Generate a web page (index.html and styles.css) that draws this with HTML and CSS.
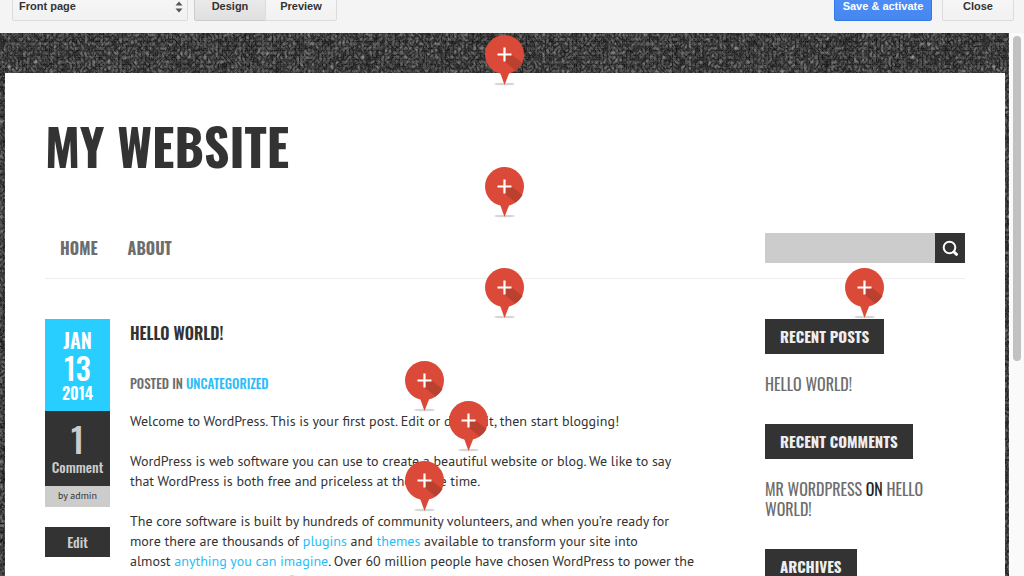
FILE: index.html
```html
<!DOCTYPE html>
<html lang="en">
<head>
<meta charset="utf-8">
<title>My Website – layout editor</title>
<link rel="stylesheet" href="styles.css">
</head>
<body>
<svg class="defs" aria-hidden="true">
  <filter id="leather" x="0" y="0" width="100%" height="100%" color-interpolation-filters="sRGB">
    <feTurbulence type="turbulence" baseFrequency="0.26 0.22" numOctaves="3" seed="8"/>
    <feColorMatrix values="0.4 0.35 0 0 0.03  0.4 0.35 0 0 0.03  0.4 0.35 0 0 0.03  0 0 0 0 1"/>
  </filter>
  <symbol id="pin" viewBox="0 0 40 51">
    <ellipse cx="19.500" cy="49" rx="10.500" ry="1.300" fill="#d6d6d6"/>
    <path d="M14.500 36h10.500L19.500 50z" fill="#db4a39"/>
    <circle cx="19.500" cy="19.500" r="19.500" fill="#db4a39"/>
    <path d="M19.500 26.500V19.500h7l11 8.500A19.500 19.500 0 0 1 30.500 35.600z" fill="#ba4030"/>
    <path d="M12.500 19.500h14M19.500 12.500v14" stroke="#fff" stroke-width="2.200"/>
  </symbol>
</svg>

<header class="toolbar">
  <label class="template">
    <select class="control template-select" aria-label="Template"><option>Front page</option></select>
    <svg class="arrows" viewBox="0 0 8 12"><path d="M0.500 4.500 4 0.500l3.500 4zM0.500 7.500 4 11.500l3.500-4z" fill="#555"/></svg>
  </label>
  <div class="modes">
    <button class="control mode mode-active">Design</button><button class="control mode">Preview</button>
  </div>
  <div class="actions">
    <button class="control save">Save &amp; activate</button>
    <button class="control close">Close</button>
  </div>
</header>

<div class="workspace">
  <div class="preview">
    <svg class="backdrop" aria-hidden="true"><rect width="100%" height="100%" filter="url(#leather)"/></svg>
    <main class="site">
      <h1 class="site-title">MY WEBSITE</h1>
      <nav class="site-nav">
        <a href="#home">HOME</a>
        <a href="#about">ABOUT</a>
        <form class="search">
          <input class="search-box" type="search" aria-label="Search">
          <button class="search-button" type="button" aria-label="Submit search">
            <svg viewBox="0 0 18 18" fill="none" stroke="#fff"><circle cx="8.500" cy="8.500" r="5.800" stroke-width="2"/><path d="M13 13 15.500 15.300" stroke-width="3" stroke-linecap="round"/></svg>
          </button>
        </form>
      </nav>
      <div class="columns">
        <aside class="meta">
          <time class="date" datetime="2014-01-13"><span>JAN</span><b>13</b><small>2014</small></time>
          <div class="comments"><b>1</b><span>Comment</span></div>
          <div class="author">by admin</div>
          <a class="edit" href="#edit">Edit</a>
        </aside>
        <article class="post">
          <h2 class="post-title">HELLO WORLD!</h2>
          <p class="posted">POSTED IN <a href="#uncategorized">UNCATEGORIZED</a></p>
          <p>Welcome to WordPress. This is your first post. Edit or delete it, then start blogging!</p>
          <p>WordPress is web software you can use to create a beautiful website or blog. We like to say<br>that WordPress is both free and priceless at the same time.</p>
          <p>The core software is built by hundreds of community volunteers, and when you’re ready for<br>more there are thousands of <a href="#plugins">plugins</a> and <a href="#themes">themes</a> available to transform your site into<br>almost <a href="#ideas">anything you can imagine</a>. Over 60 million people have chosen WordPress to power the<br>place on the web they call “home” — we’d love you to join the family.</p>
        </article>
        <aside class="sidebar">
          <h3 class="widget-title">RECENT POSTS</h3>
          <p class="widget"><a href="#hello">HELLO WORLD!</a></p>
          <h3 class="widget-title">RECENT COMMENTS</h3>
          <p class="widget"><a href="#mr">MR WORDPRESS</a> ON <a href="#hello">HELLO<br>WORLD!</a></p>
          <h3 class="widget-title">ARCHIVES</h3>
        </aside>
      </div>
    </main>
    <button class="pin pin-top" aria-label="Add widget"><svg><use href="#pin"/></svg></button>
    <button class="pin pin-header" aria-label="Add widget"><svg><use href="#pin"/></svg></button>
    <button class="pin pin-nav" aria-label="Add widget"><svg><use href="#pin"/></svg></button>
    <button class="pin pin-sidebar" aria-label="Add widget"><svg><use href="#pin"/></svg></button>
    <button class="pin pin-meta" aria-label="Add widget"><svg><use href="#pin"/></svg></button>
    <button class="pin pin-intro" aria-label="Add widget"><svg><use href="#pin"/></svg></button>
    <button class="pin pin-text" aria-label="Add widget"><svg><use href="#pin"/></svg></button>
  </div>
  <div class="scrollbar"><div class="thumb"></div></div>
</div>
</body>
</html>
```
FILE: styles.css
```css
* { box-sizing: border-box; }

body {
  margin: 0;
  height: 100vh;
  display: flex;
  flex-direction: column;
  overflow: hidden;
  background: #f4f4f4;
  color: #333;
  font-family: "Liberation Sans", Arial, sans-serif;
}

a { text-decoration: none; }
.defs { position: absolute; width: 0; height: 0; }

/* Toolbar */
.toolbar {
  flex: none;
  height: 33px;
  padding: 0 10px 12px 12px;
  display: flex;
  align-items: flex-end;
  gap: 6px;
  overflow: hidden;
}
.control {
  height: 30px;
  margin: 0;
  padding: 0;
  border: 1px solid #dcdcdc;
  border-radius: 2px;
  background: linear-gradient(#f8f8f8, #f1f1f1);
  color: #333;
  font: bold 11px "Liberation Sans", Arial, sans-serif;
}
.template { position: relative; display: flex; }
.template-select { width: 176px; padding: 0 6px; appearance: none; }
.arrows { position: absolute; right: 5px; bottom: 8px; width: 8px; height: 12px; }
.modes { display: flex; }
.mode { width: 72px; margin-left: -1px; border-radius: 0 2px 2px 0; }
.mode-active {
  margin-left: 0;
  border-color: #ccc;
  border-radius: 2px 0 0 2px;
  background: linear-gradient(#eee, #e0e0e0);
}
.actions { display: flex; gap: 10px; margin-left: auto; }
.save {
  width: 98px;
  border-color: #3079ed;
  background: linear-gradient(#4d90fe, #4787ed);
  color: #fff;
}
.close { width: 72px; }

/* Preview */
.workspace { flex: 1; min-height: 0; display: flex; }
.preview { flex: 1; position: relative; overflow: hidden; background: #2d2d2d; }
.backdrop { position: absolute; top: 0; left: 0; width: 100%; height: 100%; }
.scrollbar { width: 15px; padding: 3px 3px 0 4px; background: #fafafa; }
.thumb { height: 325px; border-radius: 4px; background: #c1c1c1; }

.site {
  position: relative;
  margin: 40px 4px 0 5px;
  padding: 40px;
  min-height: 100%;
  background: #fff;
  font: 14px/20px "PT Sans", "Noto Sans", sans-serif;
}
.site-title, .site-nav, .meta, .post-title, .posted, .sidebar {
  font-family: Oswald, "Liberation Sans Narrow", "DejaVu Sans Condensed", sans-serif;
}
.site-title { margin: 0; font-size: 50px; line-height: 64px; font-weight: 700; }

.site-nav {
  display: flex;
  align-items: center;
  gap: 30px;
  height: 61px;
  margin-top: 41px;
  padding-left: 15px;
  border-bottom: 1px solid #eee;
  font-size: 16px;
  font-weight: 700;
}
.site-nav a { color: #6d6d6d; }
.search { display: flex; margin-left: auto; }
.search-box { width: 170px; height: 30px; padding: 0 8px; border: 0; background: #ccc; appearance: none; }
.search-button {
  width: 30px;
  height: 30px;
  padding: 6px;
  border: 0;
  background: #333;
}
.search-button svg { display: block; width: 18px; height: 18px; }

.columns {
  display: grid;
  grid-template-columns: 65px 1fr 200px;
  column-gap: 20px;
  padding-top: 40px;
}
.meta { display: flex; flex-direction: column; text-align: center; font-weight: 600; }
.date, .comments { display: flex; flex-direction: column; align-items: center; }
.date { height: 92px; padding-top: 8px; background: #27ceff; color: #fff; }
.date span { font-size: 20px; line-height: 26px; }
.date b { font-size: 30px; line-height: 30px; font-weight: 500; }
.date small { font-size: 16px; line-height: 20px; }
.comments { height: 75px; padding-top: 10px; background: #333; color: #ccc; }
.comments b { font-size: 34px; line-height: 36px; font-weight: 500; }
.comments span { font-size: 14px; line-height: 20px; font-weight: 500; }
.author {
  height: 21px;
  background: #ccc;
  color: #333;
  font: 10px/19px "PT Sans", "Noto Sans", sans-serif;
}
.edit {
  height: 30px;
  margin-top: 20px;
  background: #333;
  color: #ccc;
  font-size: 14px;
  line-height: 30px;
  font-weight: 500;
}

.post { white-space: nowrap; }
.post p { margin: 0 0 20px; }
.post a { color: #27bdf8; }
.post .post-title { margin: 0 0 26px; font-size: 16px; line-height: 28px; font-weight: 600; }
.post .posted { margin-bottom: 18px; color: #6d6d6d; font-size: 13px; font-weight: 500; }

.widget-title {
  width: fit-content;
  margin: 0 0 20px;
  padding: 0 15px;
  background: #333;
  color: #eee;
  font-size: 15px;
  line-height: 35px;
  font-weight: 700;
}
.widget { margin: 0 0 30px; color: #222; font-size: 16px; line-height: 20px; }
.widget a { color: #6d6d6d; }

/* Insertion pins laid over the page */
.pin { position: absolute; width: 40px; height: 51px; padding: 0; border: 0; background: none; }
.pin svg { display: block; width: 40px; height: 51px; }
.pin-top { left: 485px; top: 2px; }
.pin-header { left: 485px; top: 134px; }
.pin-nav { left: 485px; top: 235px; }
.pin-sidebar { left: 845px; top: 235px; }
.pin-meta { left: 405px; top: 328px; }
.pin-intro { left: 449px; top: 368px; }
.pin-text { left: 405px; top: 428px; }
```
